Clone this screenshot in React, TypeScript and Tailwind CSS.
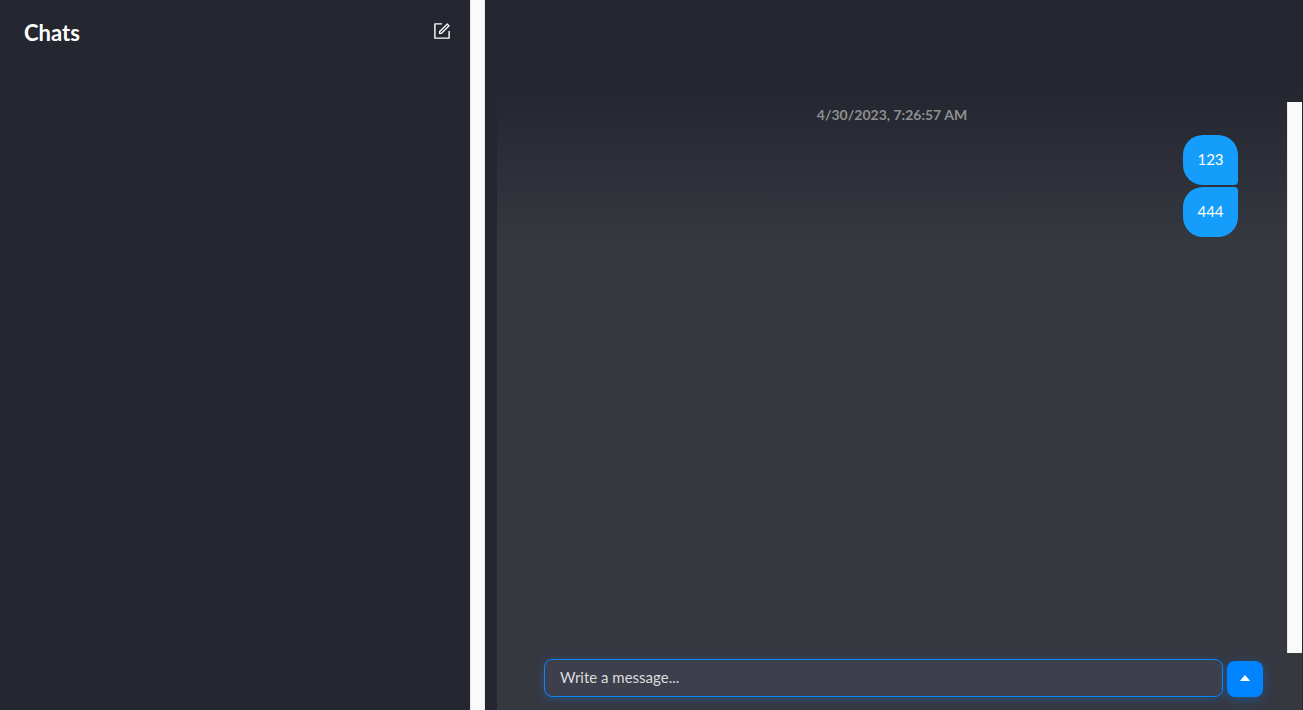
import { AiFillCaretUp, AiOutlineForm } from "react-icons/ai";

const messages = [
  { id: 1, text: "123", shape: "rounded-[20px] rounded-br-[4px]" },
  { id: 2, text: "444", shape: "rounded-[20px] rounded-tr-[4px]" },
];

function Sidebar() {
  return (
    <aside className="flex w-[485px] shrink-0">
      <header className="flex flex-1 items-start justify-between pt-[19px] pr-[18px] pl-6">
        <h1 className="text-[22px] leading-7 font-bold text-white">Chats</h1>
        <button type="button" aria-label="New chat" className="mt-[2px] text-white">
          <AiOutlineForm size={20} />
        </button>
      </header>
      <div className="w-[15px] border-x border-[#e8e8e8] bg-[#fafafa]" />
    </aside>
  );
}

function Feed() {
  return (
    <div className="flex min-h-0 flex-1">
      <section className="flex flex-1 flex-col pt-[3px]">
        <time className="text-center text-[14px] leading-5 font-bold text-[#8f8f90]">
          4/30/2023, 7:26:57 AM
        </time>
        <ul className="mt-[10px] mr-[49px] flex flex-col items-end gap-[2px]">
          {messages.map((message) => (
            <li
              key={message.id}
              className={`flex h-[50px] min-w-[55px] items-center justify-center bg-[#149dfb] px-[14px] pb-[2px] text-[15px] text-white ${message.shape}`}
            >
              {message.text}
            </li>
          ))}
        </ul>
      </section>
      <div className="w-[15px] border-l border-[#e8e8e8] bg-[#fafafa]" />
    </div>
  );
}

function Composer() {
  return (
    <form
      className="flex h-[57px] items-start gap-1 pt-[6px] pr-[39px] pl-[47px]"
      onSubmit={(event) => event.preventDefault()}
    >
      <input
        type="text"
        aria-label="Message"
        placeholder="Write a message..."
        className="h-[38px] min-w-0 flex-1 rounded-lg border border-[#0a84ff] bg-[#3d404c] px-[15px] pb-[2px] text-[15px] text-white shadow-[0_2px_10px_rgba(10,132,255,0.3)] outline-none placeholder:text-[#dcdcde]"
      />
      <button
        type="submit"
        aria-label="Send"
        className="mt-[2px] flex h-9 w-9 items-center justify-center rounded-lg bg-[#0084ff] pb-[2px] text-white shadow-[0_3px_12px_rgba(10,132,255,0.35)]"
      >
        <AiFillCaretUp size={14} />
      </button>
    </form>
  );
}

export default function App() {
  return (
    <div className="flex h-screen bg-[#242730] font-['Lato','Noto_Sans',sans-serif]">
      <Sidebar />
      <main className="flex min-w-0 flex-1 flex-col pr-px pl-3">
        <div className="flex min-h-0 flex-1 flex-col bg-linear-to-b from-[#242730] from-[92px] to-[#363840] to-[242px] pt-[102px]">
          <Feed />
          <Composer />
        </div>
      </main>
    </div>
  );
}
